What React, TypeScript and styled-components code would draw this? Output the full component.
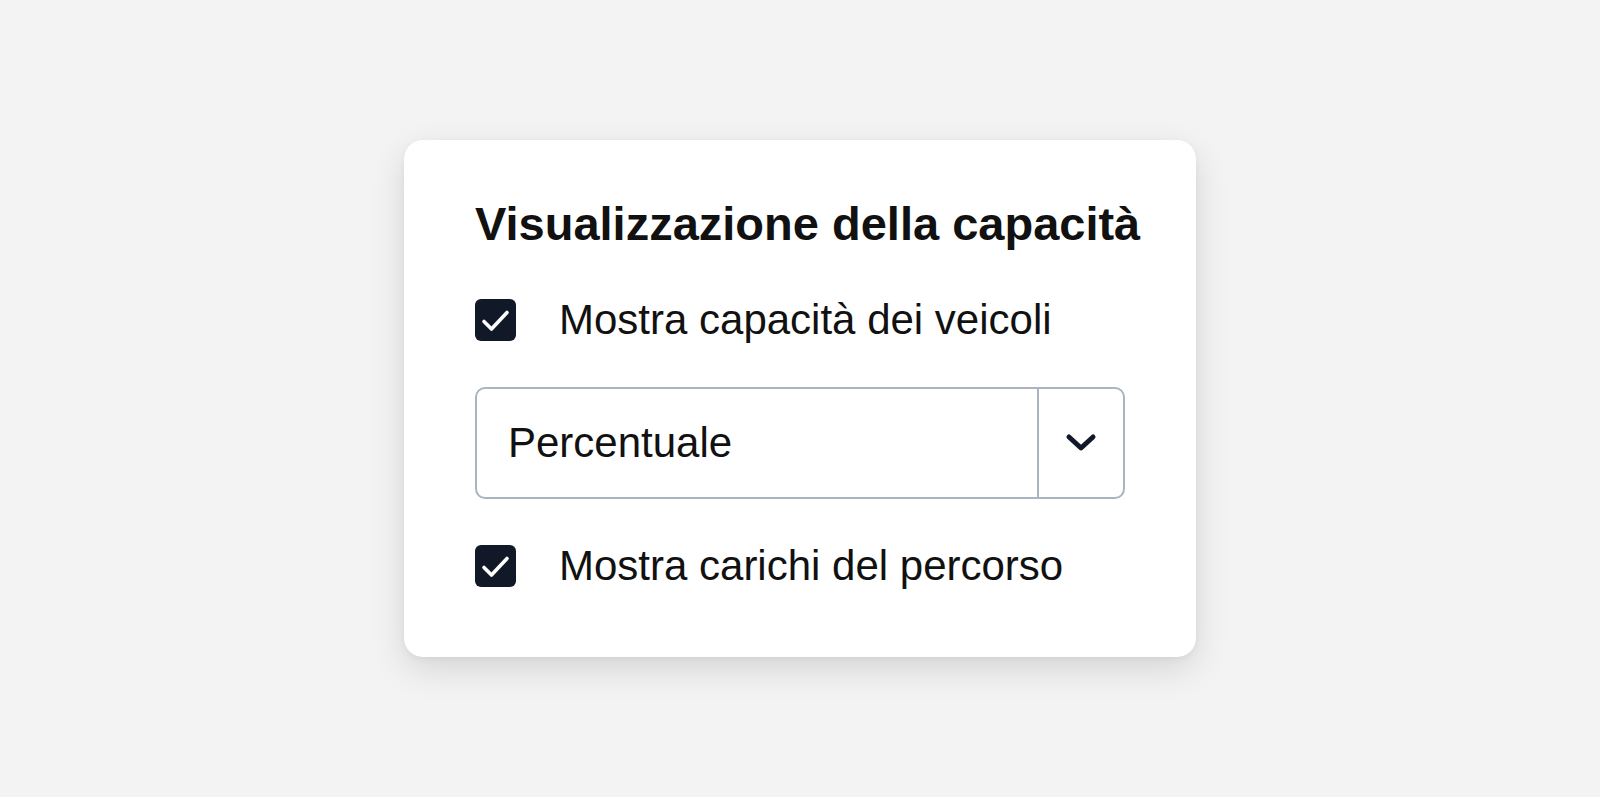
import React from 'react';
import styled, { createGlobalStyle } from 'styled-components';

const GlobalStyle = createGlobalStyle`
  html, body {
    margin: 0;
    padding: 0;
    background: #f3f3f3;
    font-family: 'Liberation Sans', Arial, sans-serif;
    color: #111111;
  }
`;

const Page = styled.main`
  min-height: 100vh;
  display: flex;
  align-items: center;
  justify-content: center;
`;

const Card = styled.section`
  width: 792px;
  box-sizing: border-box;
  padding: 60px 71px 70px 71px;
  background: #ffffff;
  border-radius: 19px;
  box-shadow: 0 12px 34px rgba(0, 0, 0, 0.12), 0 2px 6px rgba(0, 0, 0, 0.05);
  display: flex;
  flex-direction: column;
  gap: 46px;
`;

const Title = styled.h2`
  margin: 0 0 6px 0;
  font-size: 47px;
  line-height: 1;
  font-weight: 700;
  color: #111111;
  white-space: nowrap;
`;

const CheckRow = styled.label`
  display: flex;
  align-items: center;
  gap: 43px;
  height: 42px;
  cursor: pointer;
`;

const Box = styled.span<{ checked: boolean }>`
  width: 41px;
  height: 42px;
  flex: none;
  box-sizing: border-box;
  border-radius: 6px;
  background: ${(p) => (p.checked ? '#111827' : '#ffffff')};
  border: ${(p) => (p.checked ? 'none' : '2px solid #a7b1bf')};
  display: flex;
  align-items: center;
  justify-content: center;
`;

const Label = styled.span`
  font-size: 42px;
  line-height: 1;
  color: #111111;
  white-space: nowrap;
`;

const Select = styled.div`
  display: flex;
  height: 112px;
  box-sizing: border-box;
  border: 2px solid #aab4c2;
  border-radius: 10px;
  background: #ffffff;
`;

const SelectValue = styled.div`
  flex: 1;
  display: flex;
  align-items: center;
  padding-left: 31px;
  font-size: 42px;
  line-height: 1;
  color: #111111;
`;

const SelectToggle = styled.div`
  width: 84px;
  flex: none;
  border-left: 2px solid #aab4c2;
  display: flex;
  align-items: center;
  justify-content: center;
`;

const CheckMark = () => (
  <svg width="41" height="42" viewBox="0 0 41 42" fill="none">
    <path
      d="M9 22.5 L16.5 30 L32 13.5"
      stroke="#ffffff"
      strokeWidth="3.6"
      strokeLinecap="round"
      strokeLinejoin="round"
    />
  </svg>
);

const Chevron = () => (
  <svg width="34" height="22" viewBox="0 0 34 22" fill="none">
    <path
      d="M5 5 L17 16 L29 5"
      stroke="#111827"
      strokeWidth="5"
      strokeLinecap="round"
      strokeLinejoin="round"
    />
  </svg>
);

const Checkbox = ({ checked, label }: { checked: boolean; label: string }) => (
  <CheckRow>
    <Box checked={checked}>{checked && <CheckMark />}</Box>
    <Label>{label}</Label>
  </CheckRow>
);

export default function App() {
  return (
    <Page>
      <GlobalStyle />
      <Card>
        <Title>Visualizzazione della capacità</Title>
        <Checkbox checked label="Mostra capacità dei veicoli" />
        <Select>
          <SelectValue>Percentuale</SelectValue>
          <SelectToggle>
            <Chevron />
          </SelectToggle>
        </Select>
        <Checkbox checked label="Mostra carichi del percorso" />
      </Card>
    </Page>
  );
}
